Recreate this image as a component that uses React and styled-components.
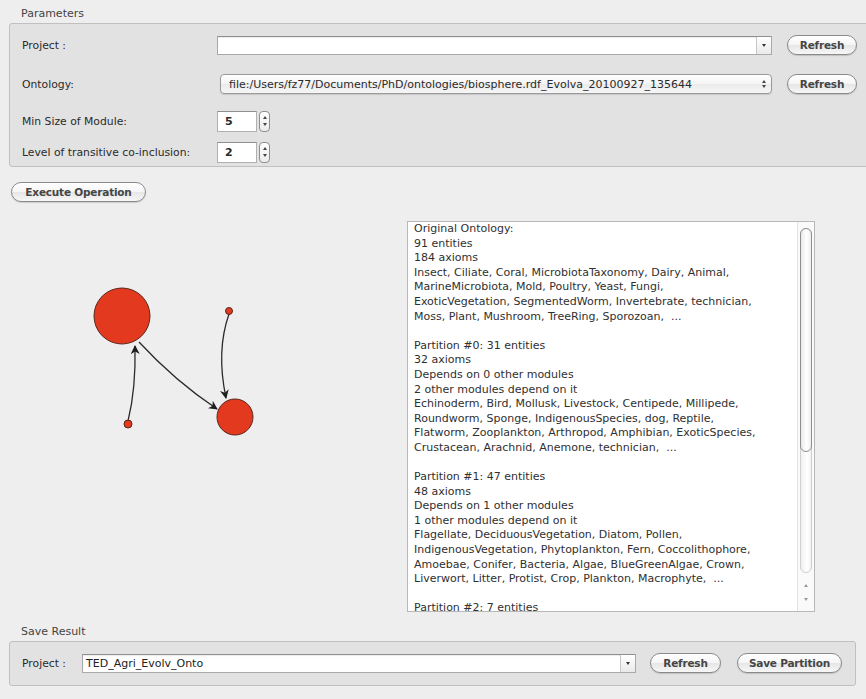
import React from "react";
import styled, { createGlobalStyle } from "styled-components";

const Global = createGlobalStyle`
  html, body { margin: 0; padding: 0; background: #eeeeee; overflow: hidden; }
  body { font-family: "DejaVu Sans", "Liberation Sans", sans-serif; color: #333; }
  * { box-sizing: border-box; }
`;

const Window = styled.div`
  width: 866px;
  height: 699px;
  padding: 7px 0 0 9px;
  display: flex;
  flex-direction: column;
  background: #eeeeee;
  overflow: hidden;
`;

const GroupTitle = styled.div`
  font-size: 11px;
  line-height: 14px;
  height: 16px;
  color: #444;
  padding-left: 12px;
  margin-top: ${(p) => p.$top || 0}px;
`;

const GroupBox = styled.div`
  display: flex;
  flex-direction: column;
  background: #e2e2e2;
  border: 1px solid #c0c0c0;
  border-radius: 3px;
  padding: ${(p) => p.$pad};
  margin-right: ${(p) => p.$right}px;
`;

const FormRow = styled.div`
  display: flex;
  align-items: center;
  height: ${(p) => p.$h || 20}px;
  margin-top: ${(p) => p.$top || 0}px;
  padding-left: 12px;
`;

const Label = styled.div`
  width: ${(p) => p.$w}px;
  flex: none;
  font-size: 10.8px;
  color: #2a2a2a;
  white-space: nowrap;
`;

const Combo = styled.div`
  flex: 1;
  display: flex;
  height: ${(p) => p.$h || 19}px;
  margin-right: ${(p) => p.$gap}px;
  background: #fff;
  border: 1px solid #a9a9a9;
  border-top-color: #8f8f8f;
  box-shadow: inset 0 1px 1px rgba(0, 0, 0, 0.08);
`;

const ComboText = styled.div`
  flex: 1;
  font-size: 11px;
  line-height: 17px;
  padding-left: 3px;
  color: #222;
  white-space: nowrap;
  overflow: hidden;
`;

const ComboArrow = styled.div`
  width: 15px;
  flex: none;
  border-left: 1px solid #c8c8c8;
  background: linear-gradient(#ffffff, #eaeaea);
  display: flex;
  align-items: center;
  justify-content: center;
  &::after {
    content: "";
    border-left: 2.5px solid transparent;
    border-right: 2.5px solid transparent;
    border-top: 3.5px solid #333;
  }
`;

const Popup = styled.div`
  flex: 1;
  display: flex;
  align-items: center;
  height: 20px;
  margin-left: 3px;
  margin-right: 15px;
  padding: 0 5px 0 8px;
  border: 1px solid #9a9a9a;
  border-radius: 4px;
  background: linear-gradient(#ffffff, #f4f4f4 50%, #ebebeb 51%, #f6f6f6);
  box-shadow: 0 1px 1px rgba(0, 0, 0, 0.12);
`;

const PopupText = styled.div`
  flex: 1;
  font-size: 11px;
  color: #2a2a2a;
  white-space: nowrap;
  overflow: hidden;
`;

const PillButton = styled.button`
  flex: none;
  width: ${(p) => p.$w}px;
  height: 20px;
  margin-left: ${(p) => p.$left || 0}px;
  padding: 0;
  border: 1px solid #8a8a8a;
  border-radius: 10px;
  background: linear-gradient(#ffffff, #f5f5f5 50%, #e6e6e6 52%, #f7f7f7);
  box-shadow: 0 1px 1px rgba(0, 0, 0, 0.15);
  font-family: "DejaVu Sans", "Liberation Sans", sans-serif;
  font-size: 10.5px;
  font-weight: 700;
  color: #454545;
  letter-spacing: -0.2px;
`;

const SpinField = styled.div`
  width: 40px;
  height: 21px;
  background: #fff;
  border: 1px solid #b0b0b0;
  border-top-color: #8f8f8f;
  font-size: 11px;
  font-weight: 700;
  line-height: 19px;
  padding-left: 7px;
  color: #2a2a2a;
`;

const Stepper = styled.div`
  width: 11px;
  height: 21px;
  margin-left: 2px;
  border: 1px solid #8f8f8f;
  border-radius: 4px;
  background: linear-gradient(#ffffff, #ececec);
  display: flex;
  flex-direction: column;
  align-items: center;
  justify-content: space-evenly;
`;

const Tri = styled.span`
  width: 0;
  height: 0;
  border-left: 2px solid transparent;
  border-right: 2px solid transparent;
  ${(p) =>
    p.$up
      ? `border-bottom: 3px solid ${p.$c || "#444"};`
      : `border-top: 3px solid ${p.$c || "#444"};`}
`;

const UpDown = styled.div`
  display: flex;
  flex-direction: column;
  gap: 2px;
  align-items: center;
  margin-left: 6px;
`;

const Toolbar = styled.div`
  display: flex;
  margin-top: 15px;
  padding-left: 2px;
`;

const Workspace = styled.div`
  display: flex;
  margin-top: 19px;
  height: 391px;
`;

const GraphCanvas = styled.div`
  flex: 1;
  height: 100%;
`;

const TextPane = styled.div`
  width: 408px;
  height: 391px;
  margin-right: 51px;
  display: flex;
  background: #fff;
  border: 1px solid #b8b8b8;
`;

const ReportText = styled.div`
  flex: 1;
  padding-left: 6px;
  font-size: 11px;
  line-height: 14.6px;
  color: #303030;
  white-space: pre;
  overflow: hidden;
`;

const Scrollbar = styled.div`
  width: 17px;
  flex: none;
  display: flex;
  flex-direction: column;
  border-left: 1px solid #e2e2e2;
  background: #fafafa;
`;

const Track = styled.div`
  flex: 1;
  margin: 6px 2px 2px 2px;
  border: 1px solid #cfcfcf;
  border-radius: 6px;
  background: linear-gradient(90deg, #f0f0f0, #ffffff 60%, #f2f2f2);
  display: flex;
  flex-direction: column;
`;

const Thumb = styled.div`
  height: ${(p) => p.$size}px;
  margin: -1px;
  border: 1px solid #8e8e8e;
  border-radius: 6px;
  background: linear-gradient(90deg, #e9e9e9, #ffffff 55%, #eeeeee);
`;

const ArrowBox = styled.div`
  height: 36px;
  flex: none;
  display: flex;
  flex-direction: column;
  align-items: center;
  justify-content: space-around;
  padding: 3px 0 4px;
`;

const Graph = () => (
  <svg width="100%" height="100%" viewBox="0 0 398 391">
    <defs>
      <marker
        id="head"
        viewBox="0 0 10 10"
        refX="9"
        refY="5"
        markerWidth="9"
        markerHeight="9"
        markerUnits="userSpaceOnUse"
        orient="auto"
      >
        <path d="M0,0 L10,5 L0,10 L3,5 Z" fill="#1e1e1e" />
      </marker>
    </defs>
    <g fill="none" stroke="#2a2a2a" strokeWidth="1.3">
      <path d="M119,200 Q127,168 126,125" markerEnd="url(#head)" />
      <path d="M130,121 Q166,160 208,188" markerEnd="url(#head)" />
      <path d="M220,93 Q207,130 217,177" markerEnd="url(#head)" />
    </g>
    <g fill="#e2391f" stroke="#5a261c" strokeWidth="1">
      <circle cx="113" cy="95" r="28" />
      <circle cx="226" cy="196" r="18" />
      <circle cx="220" cy="90" r="3.5" />
      <circle cx="119" cy="203" r="4" />
    </g>
  </svg>
);

const report = [
  "Original Ontology:",
  "91 entities",
  "184 axioms",
  "Insect, Ciliate, Coral, MicrobiotaTaxonomy, Dairy, Animal,",
  "MarineMicrobiota, Mold, Poultry, Yeast, Fungi,",
  "ExoticVegetation, SegmentedWorm, Invertebrate, technician,",
  "Moss, Plant, Mushroom, TreeRing, Sporozoan,  ...",
  "",
  "Partition #0: 31 entities",
  "32 axioms",
  "Depends on 0 other modules",
  "2 other modules depend on it",
  "Echinoderm, Bird, Mollusk, Livestock, Centipede, Millipede,",
  "Roundworm, Sponge, IndigenousSpecies, dog, Reptile,",
  "Flatworm, Zooplankton, Arthropod, Amphibian, ExoticSpecies,",
  "Crustacean, Arachnid, Anemone, technician,  ...",
  "",
  "Partition #1: 47 entities",
  "48 axioms",
  "Depends on 1 other modules",
  "1 other modules depend on it",
  "Flagellate, DeciduousVegetation, Diatom, Pollen,",
  "IndigenousVegetation, Phytoplankton, Fern, Coccolithophore,",
  "Amoebae, Conifer, Bacteria, Algae, BlueGreenAlgae, Crown,",
  "Liverwort, Litter, Protist, Crop, Plankton, Macrophyte,  ...",
  "",
  "Partition #2: 7 entities",
].join("\n");

export default function App() {
  return (
    <>
      <Global />
      <Window>
        <GroupTitle>Parameters</GroupTitle>
        <GroupBox $pad="11px 14px 3px 0" $right={-6}>
          <FormRow>
            <Label $w={195}>Project :</Label>
            <Combo $gap={15}>
              <ComboText />
              <ComboArrow />
            </Combo>
            <PillButton $w={70}>Refresh</PillButton>
          </FormRow>
          <FormRow $top={19}>
            <Label $w={195}>Ontology:</Label>
            <Popup>
              <PopupText>
                file:/Users/fz77/Documents/PhD/ontologies/biosphere.rdf_Evolva_20100927_135644
              </PopupText>
              <UpDown>
                <Tri $up />
                <Tri />
              </UpDown>
            </Popup>
            <PillButton $w={70}>Refresh</PillButton>
          </FormRow>
          <FormRow $h={22} $top={16}>
            <Label $w={195}>Min Size of Module:</Label>
            <SpinField>5</SpinField>
            <Stepper>
              <Tri $up />
              <Tri />
            </Stepper>
          </FormRow>
          <FormRow $h={22} $top={9}>
            <Label $w={195}>Level of transitive co-inclusion:</Label>
            <SpinField>2</SpinField>
            <Stepper>
              <Tri $up />
              <Tri />
            </Stepper>
          </FormRow>
        </GroupBox>

        <Toolbar>
          <PillButton $w={135}>Execute Operation</PillButton>
        </Toolbar>

        <Workspace>
          <GraphCanvas>
            <Graph />
          </GraphCanvas>
          <TextPane>
            <ReportText>{report}</ReportText>
            <Scrollbar>
              <Track>
                <Thumb $size={224} />
              </Track>
              <ArrowBox>
                <Tri $up $c="#9a9a9a" />
                <Tri $c="#9a9a9a" />
              </ArrowBox>
            </Scrollbar>
          </TextPane>
        </Workspace>

        <GroupTitle $top={13}>Save Result</GroupTitle>
        <GroupBox $pad="11px 13px 12px 0" $right={10}>
          <FormRow>
            <Label $w={60}>Project :</Label>
            <Combo $gap={14}>
              <ComboText>TED_Agri_Evolv_Onto</ComboText>
              <ComboArrow />
            </Combo>
            <PillButton $w={71}>Refresh</PillButton>
            <PillButton $w={105} $left={16}>
              Save Partition
            </PillButton>
          </FormRow>
        </GroupBox>
      </Window>
    </>
  );
}
